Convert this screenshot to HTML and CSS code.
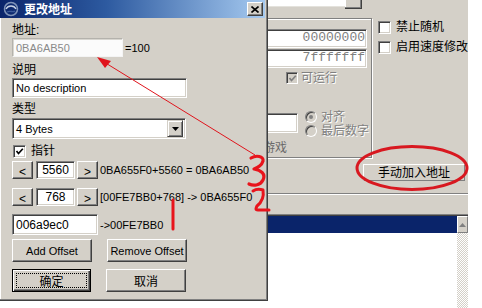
FILE: index.html
```html
<!DOCTYPE html>
<html>
<head>
<meta charset="utf-8">
<link rel="stylesheet" href="styles.css">
</head>
<body>
<div class="desk">
  <div class="bgwin">
    <div class="topbar"><div class="topfield"></div><div class="topbtn"></div></div>
    <div class="mid">
      <div class="group">
        <div class="hexfield">00000000</div>
        <div class="hexfield f2">7fffffff</div>
        <div class="chkrow dis run"><span class="cb grey"><svg width="9" height="9" viewBox="0 0 9 9"><polyline points="1.5,4 3.5,6.5 7.8,1.8" fill="none" stroke="#808080" stroke-width="1.7"/></svg></span><span class="ctext">可运行</span></div>
        <div class="alignrow">
          <div class="smalledit"></div>
          <div class="radios">
            <div class="rrow dis"><span class="radio on"></span><span class="ctext">对齐</span></div>
            <div class="rrow dis"><span class="radio"></span><span class="ctext">最后数字</span></div>
          </div>
        </div>
        <div class="gamelabel">游戏</div>
      </div>
      <div class="side">
        <div class="chkrow"><span class="cb"></span><span class="ctext">禁止随机</span></div>
        <div class="chkrow r2"><span class="cb"></span><span class="ctext">启用速度修改</span></div>
      </div>
    </div>
    <div class="addrow"><div class="btn addbtn">手动加入地址</div></div>
    <div class="sep"></div>
    <div class="list">
      <div class="lmain"><div class="lhead"></div></div>
      <div class="vscroll">
        <div class="sup"><svg width="7" height="4" viewBox="0 0 7 4"><polygon points="3.5,0 7,4 0,4" fill="#808080"/></svg></div>
        <div class="track"></div>
      </div>
    </div>
  </div>

  <div class="dlg">
    <div class="tb">
      <svg class="ticon" width="16" height="16" viewBox="0 0 16 16">
        <circle cx="8" cy="8" r="6.5" fill="none" stroke="#7f93b8" stroke-width="1.5"/>
        <path d="M3 8 C5 4, 11 4, 13 8" fill="none" stroke="#c9d3e6" stroke-width="1.3"/>
        <path d="M4 11 C7 9, 10 12, 12 10" fill="none" stroke="#3b5a9a" stroke-width="1.3"/>
      </svg>
      <span class="ttext">更改地址</span>
      <span class="tsp"></span>
      <div class="xbtn"><svg width="8" height="7" viewBox="0 0 8 7"><path d="M0.5 0.5 L7.5 6.5 M7.5 0.5 L0.5 6.5" stroke="#000" stroke-width="1.6"/></svg></div>
    </div>
    <div class="dbody">
      <div class="lbl l1">地址:</div>
      <div class="addrrow"><div class="edit addr">0BA6AB50</div><span class="eq">=100</span></div>
      <div class="lbl l2">说明</div>
      <div class="edit desc">No description</div>
      <div class="lbl l3">类型</div>
      <div class="edit combo"><span class="ctxt">4 Bytes</span><div class="ddbtn"><svg width="7" height="4" viewBox="0 0 7 4"><polygon points="0,0 7,0 3.5,4" fill="#000"/></svg></div></div>
      <div class="chkrow ptr"><span class="cb"><svg width="9" height="9" viewBox="0 0 9 9"><polyline points="1.5,4 3.5,6.5 7.8,1.8" fill="none" stroke="#000" stroke-width="1.7"/></svg></span><span class="ctext">指针</span></div>
      <div class="steprow s1">
        <div class="btn arrow">&lt;</div>
        <div class="edit step">5560</div>
        <div class="btn arrow rt">&gt;</div>
        <span class="rtext">0BA655F0+5560 = 0BA6AB50</span>
      </div>
      <div class="steprow s2">
        <div class="btn arrow">&lt;</div>
        <div class="edit step">768</div>
        <div class="btn arrow rt">&gt;</div>
        <span class="rtext">[00FE7BB0+768] -&gt; 0BA655F0</span>
      </div>
      <div class="baserow">
        <div class="edit base">006a9ec0</div>
        <span class="rtext">-&gt;00FE7BB0</span>
      </div>
      <div class="btnrow offs">
        <div class="btn wide">Add Offset</div>
        <div class="btn wide second">Remove Offset</div>
      </div>
      <div class="btnrow oks">
        <div class="btn wide def"><span class="focus">确定</span></div>
        <div class="btn wide second cjk">取消</div>
      </div>
    </div>
  </div>

  <svg class="ink" width="482" height="308" viewBox="0 0 482 308">
    <line x1="255" y1="155" x2="104" y2="62" stroke="#e0141c" stroke-width="1"/>
    <polygon points="97,57 111,61 105,68" fill="#e0141c"/>
    <path d="M251,158 C256,155 264,156 263,161 C262,165 257,168 254,169 C261,170 266,174 263,180 C260,186 253,186 249,184" fill="none" stroke="#e8141c" stroke-width="3.2" stroke-linecap="round" stroke-linejoin="round"/>
    <path d="M253,191 C256,189 260,189 263,190 C264,196 262,202 257,206 C256,208 255,210 258,210 L269,210" fill="none" stroke="#e8141c" stroke-width="3" stroke-linecap="round" stroke-linejoin="round"/>
    <line x1="173" y1="200" x2="173" y2="229" stroke="#e8141c" stroke-width="3" stroke-linecap="round"/>
    <ellipse cx="412" cy="168" rx="55" ry="21.5" fill="none" stroke="#d81820" stroke-width="3"/>
  </svg>
</div>
</body>
</html>
```

FILE: styles.css
```css
* { box-sizing: border-box; }

body {
  margin: 0;
  width: 482px;
  height: 308px;
  overflow: hidden;
  background: #fff;
  font-family: "Liberation Sans", "Noto Sans CJK SC", sans-serif;
  font-size: 11px;
  color: #000;
}

.desk {
  position: relative;
  width: 482px;
  height: 308px;
}

/* ---------- background window ---------- */
.bgwin {
  position: absolute;
  left: 160px;
  top: 0;
  width: 308px;
  height: 308px;
  background: #d4d0c8;
  display: flex;
  flex-direction: column;
  overflow: hidden;
}
.bgwin > * { flex-shrink: 0; }

.topbar { display: flex; height: 9px; }
.topfield {
  width: 185px;
  height: 7px;
  background: #fff;
  border-bottom: 1px solid #e4e2dc;
}
.topbtn {
  width: 17px;
  height: 9px;
  background: #d4d0c8;
  border-right: 1px solid #404040;
  border-bottom: 1px solid #404040;
  box-shadow: inset -1px -1px #808080, inset 1px 0 #fff;
}

.mid {
  display: flex;
  align-items: flex-start;
  margin-top: 9px;
}
.group {
  width: 218px;
  height: 140px;
  border: 1px solid #808080;
  box-shadow: inset 1px 1px #fff, 1px 1px #fff;
  display: flex;
  flex-direction: column;
}
.group > * { flex-shrink: 0; }

.hexfield {
  margin: 10px 4px 0 60px;
  height: 19px;
  background: #fff;
  border: 1px solid;
  border-color: #808080 #fff #fff #808080;
  box-shadow: inset 1px 1px #404040, inset -1px -1px #d4d0c8;
  font-family: "Liberation Mono", monospace;
  font-size: 13px;
  line-height: 16px;
  color: #808080;
  text-align: right;
  padding-right: 1px;
}
.hexfield.f2 { margin-top: 1px; }

.chkrow {
  display: flex;
  align-items: center;
  height: 14px;
  font-size: 12px;
  line-height: 14px;
  white-space: nowrap;
}
.chkrow .ctext { margin-left: 5px; }
.run { margin-top: 3px; margin-left: 125px; }
.run .ctext { margin-left: 3px; }
.dis { color: #808080; }
.dis .ctext { text-shadow: 1px 1px #fff; }

.cb {
  width: 13px;
  height: 13px;
  flex-shrink: 0;
  background: #fff;
  border: 1px solid;
  border-color: #808080 #fff #fff #808080;
  box-shadow: inset 1px 1px #404040, inset -1px -1px #d4d0c8;
  display: flex;
  align-items: center;
  justify-content: center;
}
.cb svg { display: block; }
.cb.grey { background: #d4d0c8; width: 12px; height: 12px; }

.alignrow {
  display: flex;
  margin-top: 25px;
  height: 28px;
}
.smalledit {
  margin-left: 100px;
  margin-top: 3px;
  width: 37px;
  height: 20px;
  background: #fff;
  border: 1px solid;
  border-color: #808080 #fff #fff #808080;
  box-shadow: inset 1px 1px #404040, inset -1px -1px #d4d0c8;
}
.radios { margin-left: 7px; display: flex; flex-direction: column; }
.rrow {
  display: flex;
  align-items: center;
  height: 14px;
  font-size: 12px;
  line-height: 14px;
  white-space: nowrap;
}
.rrow .ctext { margin-left: 4px; }
.radio {
  width: 12px;
  height: 12px;
  border-radius: 50%;
  border: 1px solid;
  border-color: #808080 #fff #fff #808080;
  box-shadow: inset 1px 1px #404040;
  background: #d4d0c8;
  display: flex;
  align-items: center;
  justify-content: center;
}
.radio.on::after {
  content: "";
  width: 4px;
  height: 4px;
  border-radius: 50%;
  background: #808080;
}

.gamelabel {
  margin-top: 4px;
  margin-left: 102px;
  height: 12px;
  font-size: 12px;
  line-height: 12px;
  color: #6a6a6a;
  white-space: nowrap;
}

.side {
  margin-left: 6px;
  padding-top: 2px;
  width: 90px;
  display: flex;
  flex-direction: column;
}
.side .r2 { margin-top: 6px; }

.addrow {
  margin-top: 6px;
  padding-left: 203px;
  height: 17px;
  display: flex;
}
.btn {
  background: #d4d0c8;
  border: 1px solid;
  border-color: #fff #404040 #404040 #fff;
  box-shadow: inset -1px -1px #808080;
  display: flex;
  align-items: center;
  justify-content: center;
  white-space: nowrap;
}
.addbtn {
  width: 102px;
  height: 17px;
  font-size: 12px;
  line-height: 14px;
  border-color: #fff #808080 #808080 #fff;
  box-shadow: none;
}

.sep {
  margin-top: 12px;
  height: 2px;
  border-top: 1px solid #808080;
  border-bottom: 1px solid #fff;
}

.list {
  margin-top: 19px;
  flex: 1;
  display: flex;
  border-top: 1px solid #808080;
  box-shadow: inset 0 1px #404040;
  padding-top: 1px;
}
.lmain { flex: 1; background: #fff; }
.lhead { height: 17px; background: #0a246a; }
.vscroll { width: 11px; display: flex; flex-direction: column; }
.sup {
  height: 17px;
  background: #d4d0c8;
  border: 1px solid;
  border-color: #fff #808080 #808080 #fff;
  display: flex;
  align-items: center;
  justify-content: center;
}
.sup svg { display: block; }
.track {
  flex: 1;
  background-color: #fff;
  background-image: repeating-conic-gradient(#d4d0c8 0 25%, #fff 0 50%);
  background-size: 2px 2px;
}

/* ---------- dialog ---------- */
.dlg {
  position: absolute;
  left: 0;
  top: 0;
  width: 268px;
  height: 301px;
  background: #d4d0c8;
  border-right: 1px solid #404040;
  border-bottom: 1px solid #404040;
  box-shadow: inset -1px -1px #808080, inset 1px 0 #fff;
  display: flex;
  flex-direction: column;
}

.tb {
  height: 18px;
  margin-right: 2px;
  background: linear-gradient(90deg, #0a246a 0%, #2d5aa0 40%, #a6caf0 100%);
  display: flex;
  align-items: center;
  flex-shrink: 0;
}
.ticon { margin-left: 3px; display: block; }
.ttext {
  margin-left: 5px;
  color: #fff;
  font-weight: bold;
  font-size: 12px;
  line-height: 14px;
  font-family: "Noto Sans CJK SC", sans-serif;
}
.tsp { flex: 1; }
.xbtn {
  width: 16px;
  height: 14px;
  margin-right: 2px;
  background: #d4d0c8;
  border: 1px solid;
  border-color: #fff #404040 #404040 #fff;
  box-shadow: inset -1px -1px #808080;
  display: flex;
  align-items: center;
  justify-content: center;
}
.xbtn svg { display: block; }

.dbody {
  display: flex;
  flex-direction: column;
  padding-left: 12px;
}
.dbody > * { flex-shrink: 0; }

.lbl {
  height: 14px;
  font-size: 12px;
  line-height: 14px;
}
.l1 { margin-top: 5px; }
.l2 { margin-top: 6px; }
.l3 { margin-top: 4px; }

.edit {
  background: #fff;
  border: 1px solid;
  border-color: #808080 #fff #fff #808080;
  box-shadow: inset 1px 1px #404040, inset -1px -1px #d4d0c8;
  padding-left: 3px;
  display: flex;
  align-items: center;
  white-space: nowrap;
}

.addrrow {
  margin-top: 1px;
  display: flex;
  align-items: center;
  height: 19px;
}
.edit.addr {
  width: 111px;
  height: 19px;
  color: #8a8a8a;
  border-color: #b4b2ac #f4f4f4 #f4f4f4 #b4b2ac;
  box-shadow: inset 1px 1px #d8d6d0;
  background: #fbfbfb;
}
.eq { margin-left: 2px; }

.edit.desc {
  margin-top: 1px;
  width: 175px;
  height: 20px;
}

.edit.combo {
  margin-top: 2px;
  width: 174px;
  height: 21px;
  padding-right: 2px;
}
.ctxt { flex: 1; }
.ddbtn {
  width: 16px;
  height: 17px;
  background: #d4d0c8;
  border: 1px solid;
  border-color: #d4d0c8 #404040 #404040 #d4d0c8;
  box-shadow: inset 1px 1px #fff, inset -1px -1px #808080;
  display: flex;
  align-items: center;
  justify-content: center;
}
.ddbtn svg { display: block; }

.ptr { margin-top: 5px; margin-left: 1px; }

.steprow {
  display: flex;
  align-items: center;
  height: 18px;
}
.s1 { margin-top: 3px; }
.s2 { margin-top: 9px; }
.arrow {
  width: 21px;
  height: 18px;
  font-size: 12px;
  padding-top: 3px;
}
.edit.step {
  margin-left: 3px;
  width: 39px;
  height: 18px;
  padding-left: 0;
  justify-content: center;
  font-size: 12px;
}
.arrow.rt { margin-left: 2px; }
.rtext { margin-left: 2px; white-space: nowrap; }

.baserow {
  margin-top: 8px;
  display: flex;
  align-items: center;
  height: 21px;
}
.edit.base {
  width: 86px;
  height: 21px;
  font-size: 12px;
}

.btnrow { display: flex; height: 23px; }
.offs { margin-top: 4px; }
.oks { margin-top: 7px; }
.btn.wide { width: 80px; height: 23px; }
.btn.second { margin-left: 15px; }
.cjk { font-size: 12px; }
.btn.def {
  width: 79px;
  border: 1px solid #000;
  box-shadow: inset 1px 1px #fff, inset -1px -1px #404040, inset -2px -2px #808080;
  padding: 3px;
  align-items: stretch;
  justify-content: stretch;
}
.focus {
  flex: 1;
  border: 1px dotted #000;
  display: flex;
  align-items: center;
  justify-content: center;
  font-size: 12px;
}

/* ---------- red annotations ---------- */
.ink {
  position: absolute;
  left: 0;
  top: 0;
  pointer-events: none;
}
```
